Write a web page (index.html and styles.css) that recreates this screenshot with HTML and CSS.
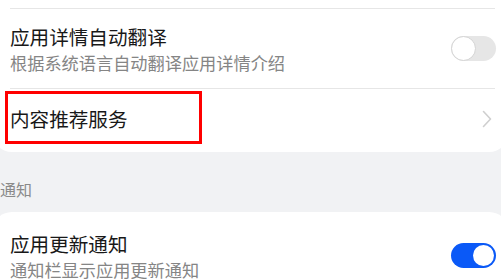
FILE: index.html
```html
<!DOCTYPE html>
<html lang="zh-CN">
<head>
  <meta charset="UTF-8" />
  <title>设置</title>
  <link rel="stylesheet" href="styles.css">
</head>
<body>

<!-- 应用设置 -->
<div class="card card-top">
  <div class="row-tail"></div>

  <div class="row row-two">
    <div class="texts">
      <div class="title">应用详情自动翻译</div>
      <div class="sub">根据系统语言自动翻译应用详情介绍</div>
    </div>
    <span class="switch"></span>
  </div>

  <div class="row row-one">
    <div class="title">内容推荐服务</div>
    <svg class="chevron" width="10" height="18" viewBox="0 0 10 18">
      <path d="M1.5 1.5 L8.5 9 L1.5 16.5" fill="none" stroke="#cfcfcf" stroke-width="1.6" stroke-linecap="round" stroke-linejoin="round"/>
    </svg>
    <div class="mark"></div>
  </div>
</div>

<div class="group-label">通知</div>

<!-- 通知 -->
<div class="card card-bottom">
  <div class="row row-two no-line">
    <div class="texts">
      <div class="title">应用更新通知</div>
      <div class="sub">通知栏显示应用更新通知</div>
    </div>
    <span class="switch on"></span>
  </div>
</div>

</body>
</html>
```

FILE: styles.css
```css
body {
  margin: 0;
  background-color: #f1f2f4;
  font-family: "Noto Sans CJK SC", "Noto Sans", sans-serif;
  overflow: hidden;
  height: 280px;
}
.card {
  background-color: #fff;
  border-radius: 20px;
  margin: 0 -8px;
  padding: 0 14px 0 18px;
}
.card-top {
  margin-top: -20px;
  padding-bottom: 3px;
}
.row-tail {
  height: 28px;
}
.row {
  position: relative;
  display: flex;
  align-items: center;
  justify-content: space-between;
  border-top: 1px solid #e6e6e6;
}
.row.no-line {
  border-top: none;
}
.row-two {
  height: 79px;
}
.row-one {
  height: 60px;
}
.texts {
  display: flex;
  flex-direction: column;
}
.title {
  font-size: 19.6px;
  line-height: 28px;
  color: #181818;
}
.sub {
  font-size: 17.2px;
  line-height: 24px;
  color: #858585;
}
.switch {
  position: relative;
  width: 45px;
  height: 25px;
  border-radius: 13px;
  background-color: #e6e6e6;
  margin-right: -1px;
  flex-shrink: 0;
}
.switch::after {
  content: "";
  position: absolute;
  left: 0;
  top: 0;
  width: 23px;
  height: 23px;
  border-radius: 50%;
  background-color: #fff;
  border: 1px solid #d4d4d4;
}
.switch.on {
  background-color: #0a59f7;
}
.switch.on::after {
  left: 22px;
  top: 2px;
  width: 21px;
  height: 21px;
  border: none;
}
.chevron {
  margin-right: 3px;
}
.mark {
  position: absolute;
  left: -5px;
  top: 2px;
  width: 197px;
  height: 53px;
  box-sizing: border-box;
  border: 3px solid #ff0000;
}
.group-label {
  height: 60px;
  line-height: 74px;
  font-size: 16px;
  color: #8a8a8a;
  margin-left: 0;
}
.card-bottom .row-two {
  height: 87px;
}
```
